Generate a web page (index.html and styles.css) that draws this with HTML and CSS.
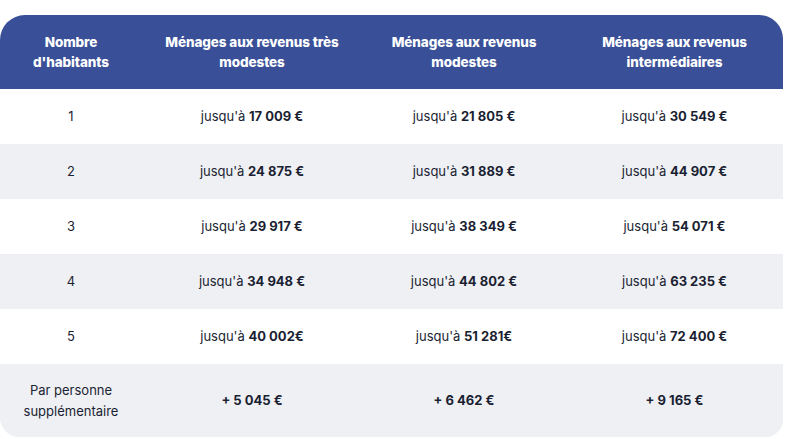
FILE: index.html
```html
<!DOCTYPE html>
<html lang="fr">
<head>
<meta charset="utf-8">
<link rel="stylesheet" href="styles.css">
</head>
<body>
<div class="wrap">
<table class="grid">
  <colgroup>
    <col class="c1"><col class="c2"><col class="c3"><col class="c4">
  </colgroup>
  <thead>
    <tr>
      <th>Nombre<br>d'habitants</th>
      <th>Ménages aux revenus très<br>modestes</th>
      <th>Ménages aux revenus<br>modestes</th>
      <th>Ménages aux revenus<br>intermédiaires</th>
    </tr>
  </thead>
  <tbody>
    <tr><td>1</td><td>jusqu'à <b>17 009 €</b></td><td>jusqu'à <b>21 805 €</b></td><td>jusqu'à <b>30 549 €</b></td></tr>
    <tr class="alt"><td>2</td><td>jusqu'à <b>24 875 €</b></td><td>jusqu'à <b>31 889 €</b></td><td>jusqu'à <b>44 907 €</b></td></tr>
    <tr><td>3</td><td>jusqu'à <b>29 917 €</b></td><td>jusqu'à <b>38 349 €</b></td><td>jusqu'à <b>54 071 €</b></td></tr>
    <tr class="alt"><td>4</td><td>jusqu'à <b>34 948 €</b></td><td>jusqu'à <b>44 802 €</b></td><td>jusqu'à <b>63 235 €</b></td></tr>
    <tr><td>5</td><td>jusqu'à <b>40 002€</b></td><td>jusqu'à <b>51 281€</b></td><td>jusqu'à <b>72 400 €</b></td></tr>
    <tr class="alt last"><td>Par personne<br>supplémentaire</td><td><b>+ 5 045 €</b></td><td><b>+ 6 462 €</b></td><td><b>+ 9 165 €</b></td></tr>
  </tbody>
</table>
</div>
</body>
</html>
```

FILE: styles.css
```css
html, body {
  margin: 0;
  background: #ffffff;
}
body {
  padding-top: 15px;
  font-family: Inter, "Noto Sans", sans-serif;
  color: #1b1f32;
}
.wrap {
  width: 783px;
  height: 422px;
  border-radius: 25px 24px 18px 20px;
  overflow: hidden;
  background: #eef0f4;
}
.grid {
  width: 783px;
  border-collapse: collapse;
  table-layout: fixed;
}
.c1 { width: 142px; }
.c2 { width: 220px; }
.c3 { width: 204px; }
.c4 { width: 217px; }
.grid th {
  height: 74px;
  padding: 0;
  background: #394f97;
  color: #ffffff;
  font-weight: 800;
  font-size: 13.5px;
  line-height: 20px;
  letter-spacing: -0.1px;
  text-align: center;
  vertical-align: middle;
}
.grid td {
  height: 55px;
  padding: 0;
  background: #ffffff;
  font-size: 13px;
  line-height: 21px;
  text-align: center;
  vertical-align: middle;
}
.grid tr.alt td {
  background: #eef0f4;
}
.grid tr.last td {
  height: 73px;
}
.grid b {
  font-weight: 700;
}
```
